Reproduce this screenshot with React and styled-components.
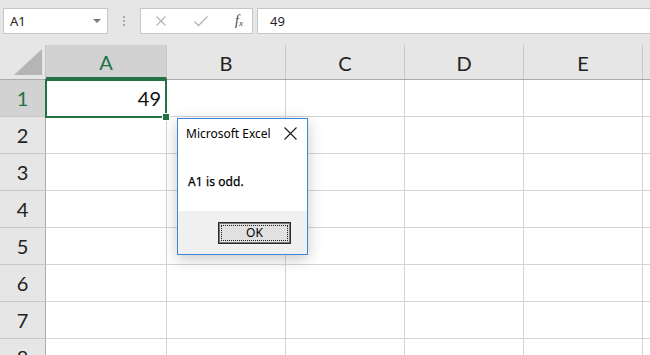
import styled, { createGlobalStyle } from 'styled-components'

const GlobalStyle = createGlobalStyle`
  html, body {
    margin: 0;
    padding: 0;
    background: #ffffff;
    overflow: hidden;
  }
`

const columns = ['A', 'B', 'C', 'D', 'E', '']
const colWidths = [121, 119, 119, 119, 119, 119]
const rows = [1, 2, 3, 4, 5, 6, 7, 8]

export default function App() {
  return (
    <Page>
      <GlobalStyle />
      <Toolbar>
        <NameBox>
          <span>A1</span>
          <DropArrow />
        </NameBox>
        <Grip>
          <i /><i /><i />
        </Grip>
        <FxBox>
          <svg width="12" height="12" viewBox="0 0 12 12">
            <path d="M1.5 1.5 L10.5 10.5 M10.5 1.5 L1.5 10.5" stroke="#b3b3b3" strokeWidth="1.2" fill="none" />
          </svg>
          <svg width="16" height="12" viewBox="0 0 16 12">
            <path d="M1.5 6.5 L5.5 10.5 L14.5 1.5" stroke="#b3b3b3" strokeWidth="1.3" fill="none" />
          </svg>
          <FxLabel>f<sub>x</sub></FxLabel>
        </FxBox>
        <FormulaBox>49</FormulaBox>
      </Toolbar>

      <Sheet>
        <HeaderRow>
          <Corner>
            <svg width="30" height="28" viewBox="0 0 30 28">
              <polygon points="1,27 29,27 29,1" fill="#b5b5b5" />
            </svg>
          </Corner>
          {columns.map((c, i) => (
            <ColHeader key={i} $selected={i === 0} style={{ width: colWidths[i] }}>{c}</ColHeader>
          ))}
        </HeaderRow>
        {rows.map((r) => (
          <Row key={r}>
            <RowHeader $selected={r === 1}>{r}</RowHeader>
            {columns.map((c, i) => (
              <Cell key={i} style={{ width: colWidths[i] }}>
                {r === 1 && c === 'A' ? '49' : ''}
              </Cell>
            ))}
          </Row>
        ))}
        <Selection>
          <Handle />
        </Selection>

        <Dialog>
          <DialogTitle>
            <span>Microsoft Excel</span>
            <svg width="13" height="13" viewBox="0 0 13 13">
              <path d="M0.5 0.5 L12.5 12.5 M12.5 0.5 L0.5 12.5" stroke="#1a1a1a" strokeWidth="1.1" fill="none" />
            </svg>
          </DialogTitle>
          <DialogBody>A1 is odd.</DialogBody>
          <DialogFooter>
            <OkButton>
              <FocusRect>OK</FocusRect>
            </OkButton>
          </DialogFooter>
        </Dialog>
      </Sheet>
    </Page>
  )
}

const Page = styled.div`
  width: 650px;
  height: 355px;
  overflow: hidden;
  background: #ffffff;
`

const Toolbar = styled.div`
  height: 45px;
  background: #e6e6e6;
  display: flex;
  align-items: flex-start;
  padding-top: 8px;
  box-sizing: border-box;
  font-family: "Noto Sans", "Open Sans", sans-serif;
  font-size: 13px;
  color: #262626;
`

const NameBox = styled.div`
  margin-left: 3px;
  width: 105px;
  height: 26px;
  box-sizing: border-box;
  background: #ffffff;
  border: 1px solid #c6c6c6;
  display: flex;
  align-items: center;
  justify-content: space-between;
  padding: 0 6px 0 6px;
`

const DropArrow = styled.div`
  width: 0;
  height: 0;
  border-left: 4px solid transparent;
  border-right: 4px solid transparent;
  border-top: 4px solid #7a7a7a;
`

const Grip = styled.div`
  width: 32px;
  height: 26px;
  display: flex;
  flex-direction: column;
  align-items: center;
  justify-content: center;
  gap: 2px;

  i {
    display: block;
    width: 2px;
    height: 2px;
    background: #a9a9a9;
  }
`

const FxBox = styled.div`
  width: 113px;
  height: 26px;
  box-sizing: border-box;
  background: #ffffff;
  border: 1px solid #c6c6c6;
  display: flex;
  align-items: center;
  justify-content: space-between;
  padding: 0 9px 0 14px;
`

const FxLabel = styled.span`
  font-family: "Liberation Serif", serif;
  font-style: italic;
  font-size: 14px;
  color: #444;
  line-height: 1;

  sub {
    font-size: 9px;
    vertical-align: -1px;
  }
`

const FormulaBox = styled.div`
  margin-left: 4px;
  flex: 1;
  height: 26px;
  box-sizing: border-box;
  background: #ffffff;
  border: 1px solid #c6c6c6;
  border-right: none;
  display: flex;
  align-items: center;
  padding-left: 12px;
`

const Sheet = styled.div`
  position: relative;
  font-family: Lato, "Noto Sans", sans-serif;
  font-size: 20px;
  color: #222;
`

const HeaderRow = styled.div`
  display: flex;
  height: 34px;
  background: #e6e6e6;
  border-bottom: 1px solid #ababab;
`

const Corner = styled.div`
  width: 46px;
  flex-shrink: 0;
  box-sizing: border-box;
  border-right: 1px solid #c8c8c8;
  display: flex;
  align-items: flex-end;
  justify-content: flex-end;
  padding: 0 2px 3px 0;
`

const ColHeader = styled.div`
  flex-shrink: 0;
  box-sizing: border-box;
  border-right: 1px solid #c8c8c8;
  background: ${(p) => (p.$selected ? '#d2d2d2' : '#e6e6e6')};
  color: ${(p) => (p.$selected ? '#217346' : '#222')};
  border-bottom: ${(p) => (p.$selected ? '2px solid #217346' : 'none')};
  display: flex;
  align-items: center;
  justify-content: center;
  padding-top: 2px;
`

const Row = styled.div`
  display: flex;
  height: 37px;
  box-sizing: border-box;
  border-bottom: 1px solid #d4d4d4;
`

const RowHeader = styled.div`
  width: 46px;
  flex-shrink: 0;
  box-sizing: border-box;
  background: ${(p) => (p.$selected ? '#d2d2d2' : '#e6e6e6')};
  color: ${(p) => (p.$selected ? '#217346' : '#222')};
  border-right: 1px solid #ababab;
  margin-bottom: -1px;
  border-bottom: 1px solid #c8c8c8;
  display: flex;
  align-items: center;
  justify-content: center;
`

const Cell = styled.div`
  flex-shrink: 0;
  box-sizing: border-box;
  border-right: 1px solid #d4d4d4;
  display: flex;
  align-items: center;
  justify-content: flex-end;
  padding-right: 5px;
  color: #111;
`

const Selection = styled.div`
  position: absolute;
  left: 45px;
  top: 34px;
  width: 122px;
  height: 39px;
  box-sizing: border-box;
  border: 2px solid #217346;
  pointer-events: none;
`

const Handle = styled.div`
  position: absolute;
  right: -5px;
  bottom: -5px;
  width: 6px;
  height: 6px;
  background: #217346;
  border: 1px solid #ffffff;
`

const Dialog = styled.div`
  position: absolute;
  left: 177px;
  top: 73px;
  width: 131px;
  height: 137px;
  box-sizing: border-box;
  border: 1px solid #3e86d4;
  background: #ffffff;
  box-shadow: 0 4px 14px rgba(0, 0, 0, 0.22);
  display: flex;
  flex-direction: column;
  font-family: "Noto Sans", "Open Sans", sans-serif;
  font-size: 12px;
  color: #000;
`

const DialogTitle = styled.div`
  height: 28px;
  display: flex;
  align-items: center;
  justify-content: space-between;
  padding: 0 10px 0 8px;
`

const DialogBody = styled.div`
  flex: 1;
  padding: 26px 0 0 10px;
  font-size: 12px;
  letter-spacing: 0.1px;
  -webkit-text-stroke: 0.25px #000;
`

const DialogFooter = styled.div`
  height: 43px;
  background: #f0f0f0;
  display: flex;
  align-items: center;
  justify-content: flex-end;
  padding-right: 16px;
`

const OkButton = styled.div`
  width: 73px;
  height: 22px;
  box-sizing: border-box;
  border: 1px solid #2b2b2b;
  background: #e1e1e1;
  box-shadow: inset 0 0 0 1px #7a7a7a;
  display: flex;
  align-items: stretch;
  padding: 2px;
`

const FocusRect = styled.div`
  flex: 1;
  border: 1px dotted #222;
  display: flex;
  align-items: center;
  justify-content: center;
  font-size: 12px;
  line-height: 1;
`
